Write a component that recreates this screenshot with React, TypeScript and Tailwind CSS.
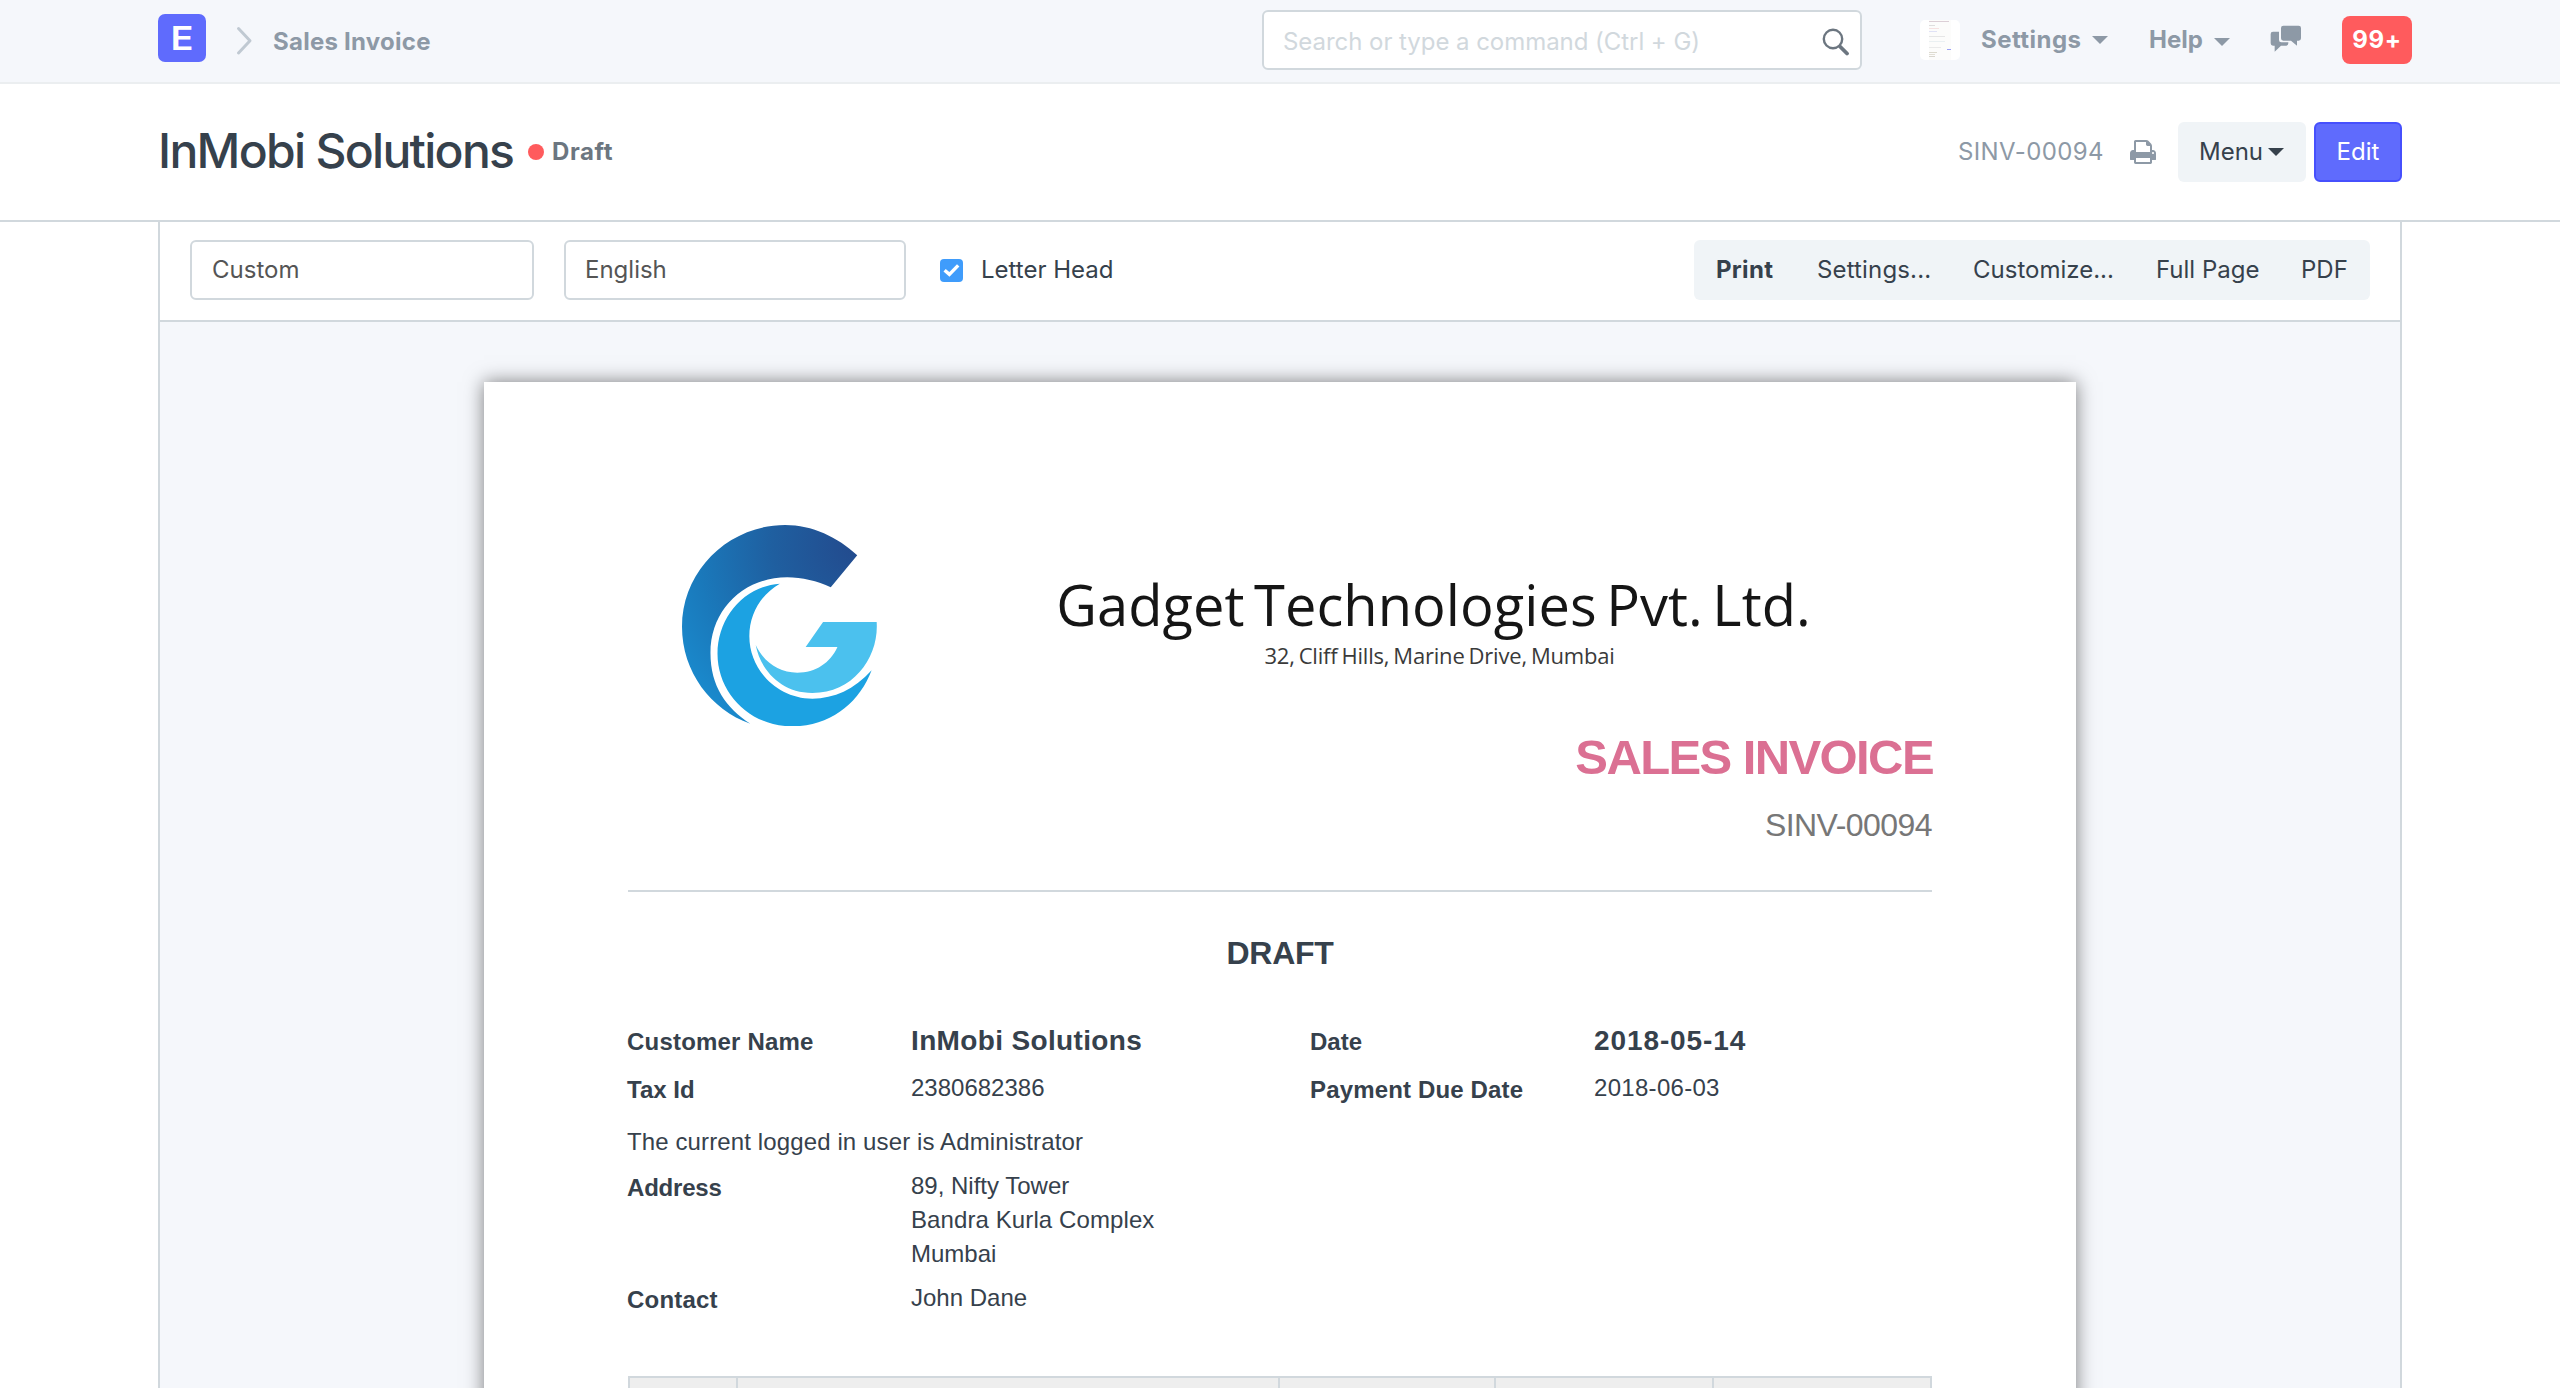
import React from 'react';

const toolbarActions = [
  { label: 'Print', width: 'w-[102px]', text: 'pl-[22px] font-bold tracking-[0.3px]' },
  { label: 'Settings...', width: 'w-[156px]', text: 'pl-[21px] tracking-[0.15px]' },
  { label: 'Customize...', width: 'w-[183px]', text: 'pl-[21px]' },
  { label: 'Full Page', width: 'w-[145px]', text: 'pl-[21px]' },
  { label: 'PDF', width: 'w-[90px]', text: 'pl-[21px]' },
];

function Caret({ className = '' }: { className?: string }) {
  return (
    <span
      className={`block h-0 w-0 border-x-8 border-t-8 border-x-transparent ${className}`}
    />
  );
}

function ChatIcon() {
  return (
    <svg width="32" height="27" viewBox="1080 76 96 81" fill="#8d99a6">
      <path d="M1120 78h46q7 0 7 7v31q0 7-7 7h-5v15l-18-15h-23q-7 0-7-7V85q0-7 7-7z" />
      <path d="M1089 96h18v25q0 7 7 7h21v3q0 7-7 7h-15l-19 18v-18h-5q-7 0-7-7v-28q0-7 7-7z" />
    </svg>
  );
}

function PrinterIcon() {
  return (
    <svg width="26" height="24" viewBox="0 128 1664 1536" fill="#8d99a6">
      <path d="M384 1536h896v-256h-896v256zM384 896h896v-384h-160q-40 0-68-28t-28-68v-160h-640v640zM1536 960q0-26-19-45t-45-19-45 19-19 45 19 45 45 19 45-19 19-45zM1664 960v416q0 13-9.5 22.5t-22.5 9.5h-224v160q0 40-28 68t-68 28h-960q-40 0-68-28t-28-68v-160h-224q-13 0-22.5-9.5t-9.5-22.5v-416q0-79 56.5-135.5t135.5-56.5h64v-544q0-40 28-68t68-28h672q40 0 88 20t76 48l152 152q28 28 48 76t20 88v256h64q79 0 135.5 56.5t56.5 135.5z" />
    </svg>
  );
}

function CompanyLogo() {
  return (
    <svg width="195" height="201" viewBox="126 106 582 603" preserveAspectRatio="none" className="shrink-0">
      <defs>
        <radialGradient id="swoosh" cx="650" cy="170" r="640" gradientUnits="userSpaceOnUse">
          <stop offset="0" stopColor="#234a8d" />
          <stop offset="0.4" stopColor="#1f5fa0" />
          <stop offset="0.75" stopColor="#1a79bb" />
          <stop offset="1" stopColor="#1a8acd" />
        </radialGradient>
      </defs>
      <path
        fill="url(#swoosh)"
        d="M649 197C590 142 515 106 434 106C264 106 126 244 126 411C126 546 212 660 330 702C258 655 211 590 211 490C211 360 310 263 440 263C484 263 530 274 570 293Z"
      />
      <path
        fill="#1ca2e2"
        d="M418 282C310 290 232 385 232 492C232 612 330 710 455 710C570 710 655 640 692 542C640 600 580 627 515 627C410 627 327 540 327 440C327 375 360 315 418 282Z"
      />
      <path
        fill="#4bc1ee"
        d="M547 397H707C714 500 640 610 515 610C420 610 360 540 346 466C370 517 415 549 470 549C525 549 568 520 590 472H495Z"
      />
    </svg>
  );
}

/* Tiny screenshot used as the user's avatar. */
function Avatar() {
  return (
    <div className="mt-5 flex h-10 w-10 justify-center rounded-[5px] bg-white">
      <div className="flex h-10 w-[22px] flex-col bg-[#fcfcfb]">
        <div className="mt-px h-px w-5 bg-[#dccfd6]" />
        <div className="mt-[3px] h-px w-1.5 bg-[#dedede]" />
        <div className="mt-[2px] h-px w-2.5 bg-[#f5e2e2]" />
        <div className="mt-[2px] h-px w-2 bg-[#e0e2f6]" />
        <div className="mt-[4px] h-px w-4 bg-[#e6e6e6]" />
        <div className="mt-[4px] h-px w-4 bg-[#eaf0f2]" />
        <div className="mt-[5px] h-px w-3 bg-[#eaeaea]" />
        <div className="mt-[1px] h-px w-1 self-end bg-[#9aa0f5]" />
        <div className="mt-[2px] h-px w-2 bg-[#dcdace]" />
        <div className="mt-[1px] h-px w-1.5 bg-[#e2dfd5]" />
        <div className="mt-[1px] h-px w-1.5 bg-[#d9d6ce]" />
      </div>
    </div>
  );
}

function Navbar() {
  return (
    <header className="flex h-[84px] shrink-0 items-start border-b-2 border-[#ebeef0] bg-[#f5f7fb] px-[158px] text-[24px] leading-[29px] font-bold text-[#8d99a6]">
      <div className="mt-3.5 flex h-12 w-12 items-center justify-center rounded-[7px] bg-[#5f6bfd] text-[33px] leading-none font-semibold text-white">
        <span className="scale-x-[1.15]">E</span>
      </div>
      <svg className="mt-[26px] ml-7 shrink-0" width="20" height="30" viewBox="0 0 20 30" fill="none" stroke="#c0c9d2" strokeWidth="3" strokeLinecap="round" strokeLinejoin="round">
        <path d="M4.5 2.5L16 14.7 4.5 27" />
      </svg>
      <span className="mt-[27px] ml-[19px] w-[160px] whitespace-nowrap tracking-[0.25px]">Sales Invoice</span>

      <div className="mt-2.5 ml-auto flex h-[60px] w-[600px] items-start rounded-[6px] border-2 border-[#d1d8dd] bg-white font-normal text-[#d1d8dd]">
        <span className="mt-[15px] ml-[19px] whitespace-nowrap tracking-[-0.05px]">Search or type a command (Ctrl + G)</span>
        <svg className="mt-4 mr-2.5 ml-auto" width="28" height="28" viewBox="0 0 28 28" fill="none" stroke="#6c7680" strokeLinecap="round">
          <circle cx="11" cy="11" r="9.2" strokeWidth="2.4" />
          <path d="M18 18.5L25 25.5" strokeWidth="3.8" />
        </svg>
      </div>

      <div className="ml-[58px] flex w-[482px] shrink-0 items-start">
        <Avatar />
        <span className="mt-[25px] ml-[21px] w-[101px] tracking-[0.45px]">Settings</span>
        <Caret className="mt-9 ml-2.5 border-t-[#8d99a6]" />
        <span className="mt-[25px] ml-[41px] w-[55px]">Help</span>
        <Caret className="mt-[38px] ml-[10px] border-t-[#8d99a6]" />
        <div className="mt-[25px] ml-10">
          <ChatIcon />
        </div>
      </div>
      <div className="-mr-2.5 mt-4 -ml-[60px] flex h-12 w-[70px] shrink-0 justify-center rounded-[8px] bg-[#ff5b5d] pt-[9px] tracking-[0.6px] text-white">
        99+
      </div>
    </header>
  );
}

function PageHead() {
  return (
    <div className="flex h-[138px] shrink-0 items-start border-b-2 border-[#d1d8dd] bg-white px-[158px] text-[24px] leading-[29px]">
      <h1 className="mt-[37px] w-[356px] text-[48px] leading-[59px] font-medium tracking-[-1.7px] whitespace-nowrap text-[#36414c]">
        InMobi Solutions
      </h1>
      <span className="mt-[60px] ml-3.5 h-4 w-4 rounded-full bg-[#ff5b5d]" />
      <span className="mt-[53px] ml-2 font-bold tracking-[0.6px] text-[#6c7680]">Draft</span>

      <span className="mt-[53px] mr-[26px] ml-auto tracking-[0.4px] text-[#8d99a6]">SINV-00094</span>
      <div className="mt-14 mr-[22px]">
        <PrinterIcon />
      </div>
      <button className="mt-[38px] mr-2 flex h-[60px] w-[128px] items-start rounded-[6px] bg-[#f0f4f7] text-[#36414c]">
        <span className="mt-[15px] ml-[21px] w-[67px] text-left">Menu</span>
        <Caret className="mt-[26px] ml-[2px] border-t-[#36414c]" />
      </button>
      <button className="mt-[38px] flex h-[60px] w-[88px] justify-center rounded-[6px] border-2 border-[#4650fd] bg-[#5f6bfd] pt-[13px] text-white">
        Edit
      </button>
    </div>
  );
}

function PrintToolbar() {
  return (
    <div className="flex h-[100px] shrink-0 items-start border-b-2 border-[#d1d8dd] bg-white px-[30px] pt-[18px] text-[24px] leading-[29px] text-[#36414c]">
      <div className="h-[60px] w-[344px] rounded-[6px] border-2 border-[#d1d8dd] pt-[13px] pl-5 text-[#555]">Custom</div>
      <div className="ml-[30px] h-[60px] w-[342px] rounded-[6px] border-2 border-[#d1d8dd] pt-[13px] pl-[19px] text-[#555]">English</div>
      <div className="mt-[19px] ml-[34px] flex h-[23px] w-[23px] items-center justify-center rounded-[4px] bg-[#3f9cfb]">
        <svg width="17" height="15" viewBox="0 0 17 15" fill="none" stroke="#fff" strokeWidth="3.4">
          <path d="M1.6 7.2L6.4 11.4 15.2 2.4" />
        </svg>
      </div>
      <span className="mt-[15px] ml-[18px]">Letter Head</span>
      <div className="ml-auto flex h-[60px] rounded-[6px] bg-[#f0f4f7]">
        {toolbarActions.map((a) => (
          <button key={a.label} className={`flex items-start pt-[15px] whitespace-nowrap ${a.width} ${a.text}`}>
            {a.label}
          </button>
        ))}
      </div>
    </div>
  );
}

function Invoice() {
  return (
    <div className="h-[1100px] w-[1592px] shrink-0 bg-white px-36 pt-[143px] font-['Liberation_Sans',sans-serif] text-[24px] leading-[27px] text-[#36414c] shadow-[0_0_18px_rgba(0,0,0,0.5)]">
      <div className="flex h-[205px] pl-[54px] font-['Open_Sans',sans-serif]">
        <CompanyLogo />
        <div className="mt-[41px] ml-[178px] flex w-[757px] flex-col items-center whitespace-nowrap">
          <div className="text-[56px] leading-[76px] tracking-[0.05px] [word-spacing:-5px] text-[#151515]">Gadget Technologies Pvt. Ltd.</div>
          <div className="-mt-[2px] ml-3 text-[22px] leading-[30px] tracking-[-0.2px] [word-spacing:-1.5px] text-[#3a3a3a]">32, Cliff Hills, Marine Drive, Mumbai</div>
        </div>
      </div>
      <div className="-mr-[1px] text-right text-[49px] leading-[54px] font-bold tracking-[-1.6px] text-[#db7093]">SALES INVOICE</div>
      <div className="mt-[23px] text-right text-[32px] leading-[36px] tracking-[-0.55px] text-[#777]">SINV-00094</div>
      <div className="mt-[47px] h-[2px] bg-[#d1d8dd]" />
      <div className="mt-[43px] text-center text-[32px] leading-[36px] font-bold tracking-[-0.3px]">DRAFT</div>

      <div className="-ml-px mt-[54px] flex h-[351px]">
        <div className="w-[683px]">
          <div className="flex h-[49px]">
            <span className="mt-[3px] w-[284px] font-bold tracking-[0.2px]">Customer Name</span>
            <span className="text-[28px] leading-[31px] font-bold tracking-[0.35px]">InMobi Solutions</span>
          </div>
          <div className="flex h-[54px]">
            <span className="mt-[2px] w-[284px] font-bold">Tax Id</span>
            <span>2380682386</span>
          </div>
          <div className="h-[44px] tracking-[0.12px]">The current logged in user is Administrator</div>
          <div className="flex h-[112px]">
            <span className="mt-[2px] w-[284px] font-bold tracking-[-0.2px]">Address</span>
            <div className="flex flex-col gap-[7px]">
              <span>89, Nifty Tower</span>
              <span className="tracking-[0.1px]">Bandra Kurla Complex</span>
              <span>Mumbai</span>
            </div>
          </div>
          <div className="flex">
            <span className="mt-[2px] w-[284px] font-bold tracking-[0.2px]">Contact</span>
            <span>John Dane</span>
          </div>
        </div>
        <div>
          <div className="flex h-[49px]">
            <span className="mt-[3px] w-[284px] font-bold">Date</span>
            <span className="text-[28px] leading-[31px] font-bold tracking-[0.9px]">2018-05-14</span>
          </div>
          <div className="flex">
            <span className="mt-[2px] w-[284px] font-bold tracking-[0.15px]">Payment Due Date</span>
            <span className="tracking-[0.3px]">2018-06-03</span>
          </div>
        </div>
      </div>

      <div className="grid h-16 grid-cols-[108px_542px_216px_218px_1fr] border-t-2 border-r-2 border-[#d1d8dd] bg-[#eee]">
        <div className="border-l-2 border-[#d1d8dd]" />
        <div className="border-l-2 border-[#d1d8dd]" />
        <div className="border-l-2 border-[#d1d8dd]" />
        <div className="border-l-2 border-[#d1d8dd]" />
        <div className="border-l-2 border-[#d1d8dd]" />
      </div>
    </div>
  );
}

export default function App() {
  return (
    <div className="flex h-[1388px] w-[2560px] flex-col overflow-hidden bg-white font-['Inter',sans-serif]">
      <Navbar />
      <PageHead />
      <main className="mx-[158px] flex min-h-0 flex-1 flex-col border-x-2 border-[#d1d8dd]">
        <PrintToolbar />
        <div className="flex min-h-0 flex-1 items-start justify-center overflow-hidden bg-[#f5f7fb] pt-[60px]">
          <Invoice />
        </div>
      </main>
    </div>
  );
}
